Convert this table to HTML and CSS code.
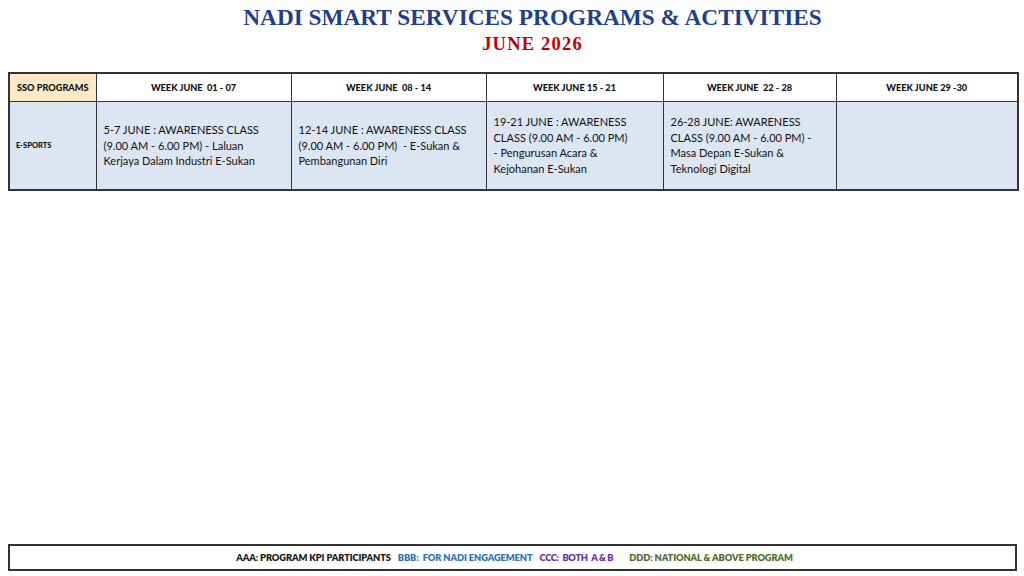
FILE: index.html
```html
<!DOCTYPE html>
<html>
<head>
<meta charset="utf-8">
<link rel="stylesheet" href="styles.css">
</head>
<body>
<div class="page">
  <header class="titles">
    <h1 class="title">NADI SMART SERVICES PROGRAMS &amp; ACTIVITIES</h1>
    <h2 class="subtitle">JUNE 2026</h2>
  </header>
  <table class="schedule">
    <colgroup>
      <col class="c-prog"><col class="c-w1"><col class="c-w2"><col class="c-w3"><col class="c-w4"><col class="c-w5">
    </colgroup>
    <thead>
      <tr>
        <th class="prog-head">SSO PROGRAMS</th>
        <th>WEEK JUNE&nbsp; 01 - 07</th>
        <th>WEEK JUNE&nbsp; 08 - 14</th>
        <th>WEEK JUNE 15 - 21</th>
        <th>WEEK JUNE&nbsp; 22 - 28</th>
        <th>WEEK JUNE 29 -30</th>
      </tr>
    </thead>
    <tbody>
      <tr>
        <td class="prog">E-SPORTS</td>
        <td>5-7 JUNE : AWARENESS CLASS<br>(9.00 AM - 6.00 PM) - Laluan<br>Kerjaya Dalam Industri E-Sukan</td>
        <td>12-14 JUNE : AWARENESS CLASS<br>(9.00 AM - 6.00 PM)&nbsp; - E-Sukan &amp;<br>Pembangunan Diri</td>
        <td>19-21 JUNE : AWARENESS<br>CLASS (9.00 AM - 6.00 PM)<br>- Pengurusan Acara &amp;<br>Kejohanan E-Sukan</td>
        <td>26-28 JUNE: AWARENESS<br>CLASS (9.00 AM - 6.00 PM) -<br>Masa Depan E-Sukan &amp;<br>Teknologi Digital</td>
        <td></td>
      </tr>
    </tbody>
  </table>
  <footer class="legend">
    <span class="k-a">AAA: PROGRAM KPI PARTICIPANTS</span>
    <span class="k-b">BBB:&nbsp; FOR NADI ENGAGEMENT</span>
    <span class="k-c">CCC:&nbsp; BOTH&nbsp; A &amp; B</span>
    <span class="k-d">DDD: NATIONAL &amp; ABOVE PROGRAM</span>
  </footer>
</div>
</body>
</html>
```
FILE: styles.css
```css
* { box-sizing: border-box; }
html, body { margin: 0; padding: 0; background: #fff; }
.page {
  width: 1024px;
  height: 576px;
  display: flex;
  flex-direction: column;
  padding: 0 7px 5px 8px;
  font-family: Lato, "Open Sans", sans-serif;
  color: #111;
}
.titles {
  text-align: center;
  padding-left: 40px;
  padding-top: 4px;
  height: 72px;
}
.title {
  margin: 0;
  font-family: "Liberation Serif", serif;
  font-weight: bold;
  font-size: 23.3px;
  line-height: 27px;
  color: #1f3f8c;
}
.subtitle {
  margin: 0;
  margin-top: 1px;
  font-family: "Liberation Serif", serif;
  font-weight: bold;
  font-size: 18.5px;
  letter-spacing: 1.2px;
  line-height: 24px;
  color: #c00000;
}
.schedule {
  width: 1009px;
  border-collapse: collapse;
  table-layout: fixed;
  border: 2px solid #333;
}
.c-prog { width: 87px; }
.c-w1 { width: 195px; }
.c-w2 { width: 195px; }
.c-w3 { width: 177px; }
.c-w4 { width: 173px; }
.c-w5 { width: 182px; }
.schedule th, .schedule td {
  border: 1.5px solid #333;
}
.schedule th {
  height: 28px;
  font-size: 9.2px;
  font-weight: 900;
  text-align: center;
  background: #fff;
  padding: 0;
}
.schedule th.prog-head {
  background: #fde9c3;
}
.schedule td {
  height: 89px;
  background: #dce6f2;
  font-size: 11px;
  line-height: 15.5px;
  padding: 0 7px;
  vertical-align: middle;
  white-space: nowrap;
}
.schedule td.prog {
  font-size: 7.5px;
  font-weight: 900;
  padding-left: 6px;
}
.legend {
  margin-top: auto;
  height: 27px;
  border: 2px solid #333;
  display: flex;
  justify-content: center;
  align-items: center;
  gap: 7px;
  font-size: 9.3px;
  font-weight: 800;
  letter-spacing: -0.1px;
  padding-left: 4px;
}
.k-a { color: #1a1a1a; }
.k-b { color: #2e74b5; }
.k-c { color: #7030a0; margin-left: 0; letter-spacing: -0.3px; }
.k-d { color: #4f6d2f; margin-left: 9px; }
```
